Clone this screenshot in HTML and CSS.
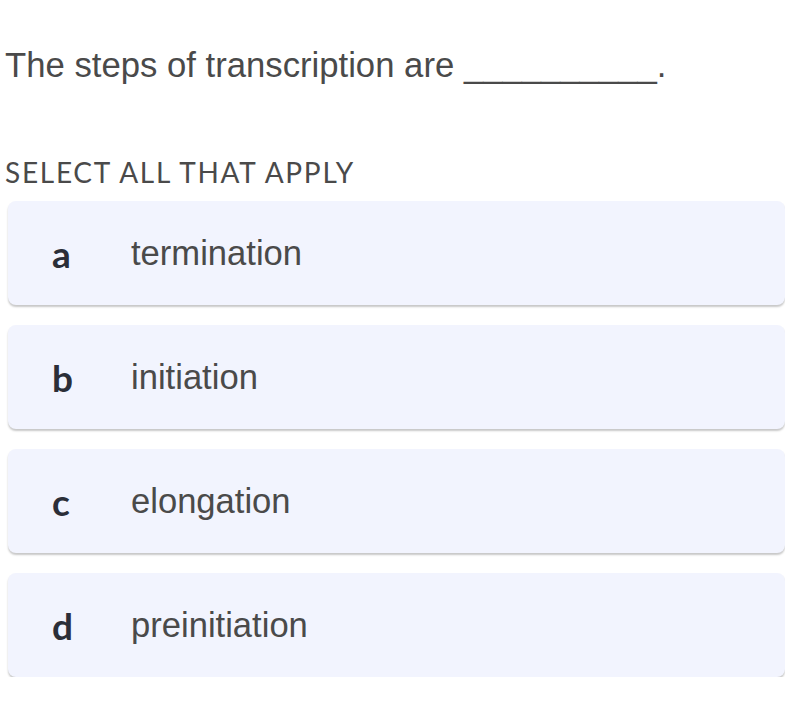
FILE: index.html
```html
<!DOCTYPE html>
<html>
<head>
<meta charset="utf-8">
<link rel="stylesheet" href="styles.css">
</head>
<body>
<div class="page">
  <p class="question">The steps of transcription are <span class="blank">__________</span>.</p>
  <p class="instruction">SELECT ALL THAT APPLY</p>
  <div class="options">
    <div class="option"><span class="letter">a</span><span class="text">termination</span></div>
    <div class="option"><span class="letter">b</span><span class="text">initiation</span></div>
    <div class="option"><span class="letter">c</span><span class="text">elongation</span></div>
    <div class="option"><span class="letter">d</span><span class="text">preinitiation</span></div>
  </div>
</div>
</body>
</html>
```
FILE: styles.css
```css
html, body {
  margin: 0;
  padding: 0;
  background: #ffffff;
}
.page {
  padding: 45px 0 0 5px;
}
.question {
  margin: 0;
  font-family: "Liberation Sans", Arial, sans-serif;
  font-size: 34.7px;
  line-height: 40px;
  color: #4a4a4a;
}
.blank {
  color: #4a4a4a;
}
.instruction {
  margin: 70px 0 0 0;
  font-family: Lato, "Open Sans", sans-serif;
  font-size: 28px;
  line-height: 34px;
  color: #4a4a4a;
  letter-spacing: 1.72px;
}
.options {
  margin: 12px 0 0 3px;
  display: flex;
  flex-direction: column;
  gap: 20px;
}
.option {
  width: 777px;
  height: 104px;
  box-sizing: border-box;
  background: #f2f4fe;
  border-radius: 8px;
  box-shadow: 0 2px 2px rgba(0, 0, 0, 0.22);
  display: flex;
  align-items: center;
  padding-left: 44px;
}
.letter {
  width: 79px;
  flex: none;
  font-family: Lato, "Open Sans", sans-serif;
  font-weight: 700;
  font-size: 37px;
  color: #2b2e38;
}
.text {
  font-family: "Liberation Sans", Arial, sans-serif;
  font-size: 34.6px;
  color: #4a4a4a;
}
```
